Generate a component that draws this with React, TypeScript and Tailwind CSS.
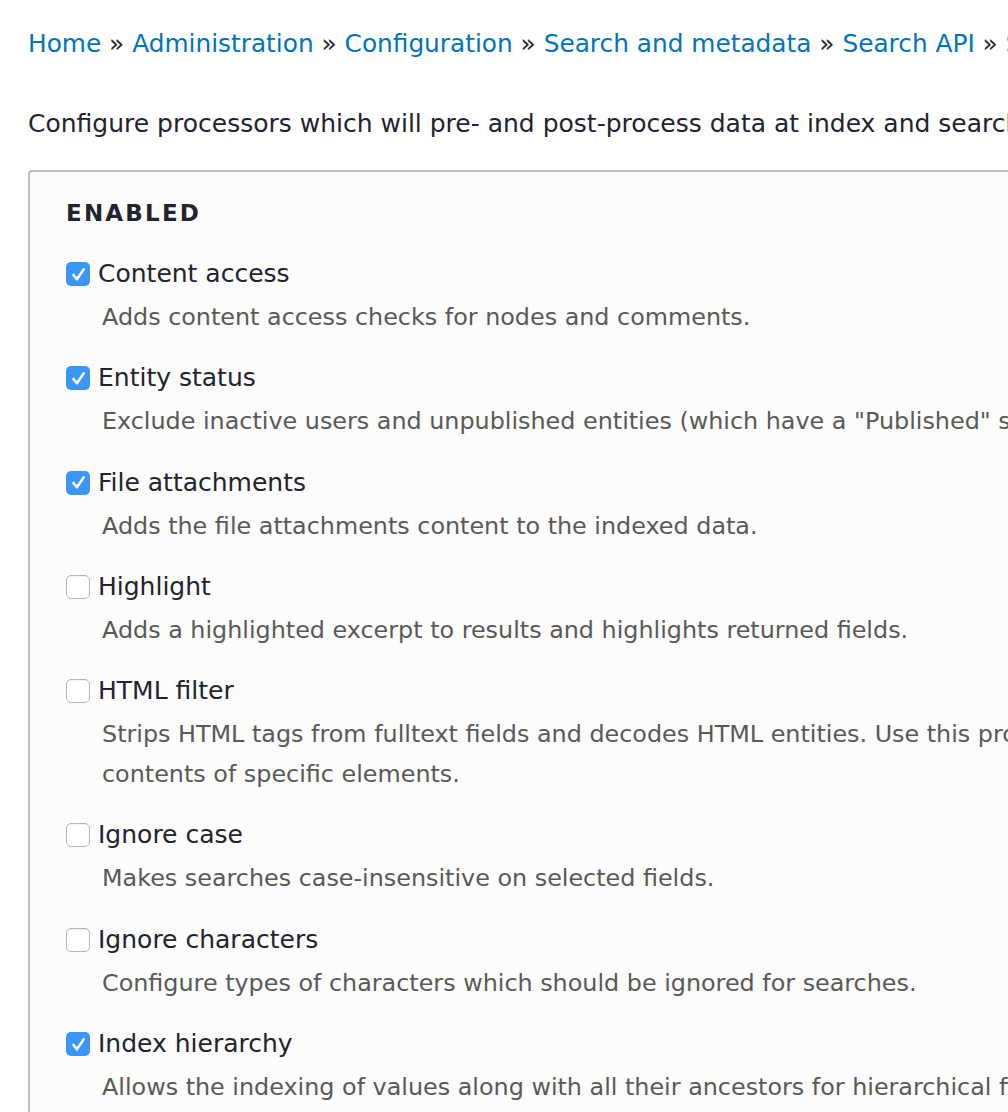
import React from "react";

type Processor = {
  label: string;
  checked: boolean;
  lines: string[];
};

const crumbs = ["Home", "Administration", "Configuration", "Search and metadata", "Search API", "Server"];

const processors: Processor[] = [
  { label: "Content access", checked: true, lines: ["Adds content access checks for nodes and comments."] },
  {
    label: "Entity status",
    checked: true,
    lines: ['Exclude inactive users and unpublished entities (which have a "Published" status field) from being indexed.'],
  },
  { label: "File attachments", checked: true, lines: ["Adds the file attachments content to the indexed data."] },
  { label: "Highlight", checked: false, lines: ["Adds a highlighted excerpt to results and highlights returned fields."] },
  {
    label: "HTML filter",
    checked: false,
    lines: [
      "Strips HTML tags from fulltext fields and decodes HTML entities. Use this processor when indexing HTML data, for example, the",
      "contents of specific elements.",
    ],
  },
  { label: "Ignore case", checked: false, lines: ["Makes searches case-insensitive on selected fields."] },
  { label: "Ignore characters", checked: false, lines: ["Configure types of characters which should be ignored for searches."] },
  {
    label: "Index hierarchy",
    checked: true,
    lines: ["Allows the indexing of values along with all their ancestors for hierarchical fields (like taxonomy term references)."],
  },
];

function Checkbox({ checked }: { checked: boolean }): React.ReactElement {
  if (checked) {
    return (
      <span className="grid h-[24px] w-[24px] shrink-0 place-items-center rounded-[5px] bg-[#3a97f9]">
        <svg viewBox="0 0 24 24" className="h-[19px] w-[19px]" fill="none" stroke="white" strokeWidth="3.2" strokeLinecap="round" strokeLinejoin="round">
          <path d="M5.5 12.5l4.5 5.5L18.5 5.5" />
        </svg>
      </span>
    );
  }
  return <span className="h-[24px] w-[24px] shrink-0 rounded-[5px] border border-[#b5b5b5] bg-white shadow-[inset_0_1px_1px_rgba(0,0,0,0.06)]" />;
}

function ProcessorRow({ item }: { item: Processor }): React.ReactElement {
  return (
    <div className="mb-[23.3px]">
      <label className="flex h-[36px] items-center gap-[8px] text-[25px] leading-[36px] text-[#222330]">
        <Checkbox checked={item.checked} />
        <span>{item.label}</span>
      </label>
      <div className="mt-[5px] pl-[36px] text-[23.85px] leading-[40px] text-[#595959]">
        {item.lines.map((line) => (
          <div key={line}>{line}</div>
        ))}
      </div>
    </div>
  );
}

export default function App(): React.ReactElement {
  return (
    <div
      className="h-[1112px] w-[1008px] overflow-hidden bg-white"
      style={{ fontFamily: '"DejaVu Sans", "Liberation Sans", sans-serif' }}
    >
      <div className="w-[1800px] whitespace-nowrap pl-[28px] pt-[26px]">
        <nav className="text-[24.8px] leading-[36px] text-[#222330]">
          {crumbs.map((crumb, i) => (
            <span key={crumb}>
              <a className="text-[#0074bd]">{crumb}</a>
              {i < crumbs.length - 1 ? " » " : null}
            </span>
          ))}
        </nav>
        <p className="mt-[44px] text-[25px] leading-[36px] text-[#222330]">
          Configure processors which will pre- and post-process data at index and search time.
        </p>
        <fieldset className="mt-[28px] w-[1400px] rounded-[4px] border-2 border-[#bfbfbf] bg-[#fcfcfa] px-[36px] pt-[24px]">
          <h2 className="mb-[26px] text-[23px] font-bold uppercase leading-[34px] tracking-[2.2px] text-[#222330]">Enabled</h2>
          {processors.map((item) => (
            <ProcessorRow key={item.label} item={item} />
          ))}
        </fieldset>
      </div>
    </div>
  );
}
